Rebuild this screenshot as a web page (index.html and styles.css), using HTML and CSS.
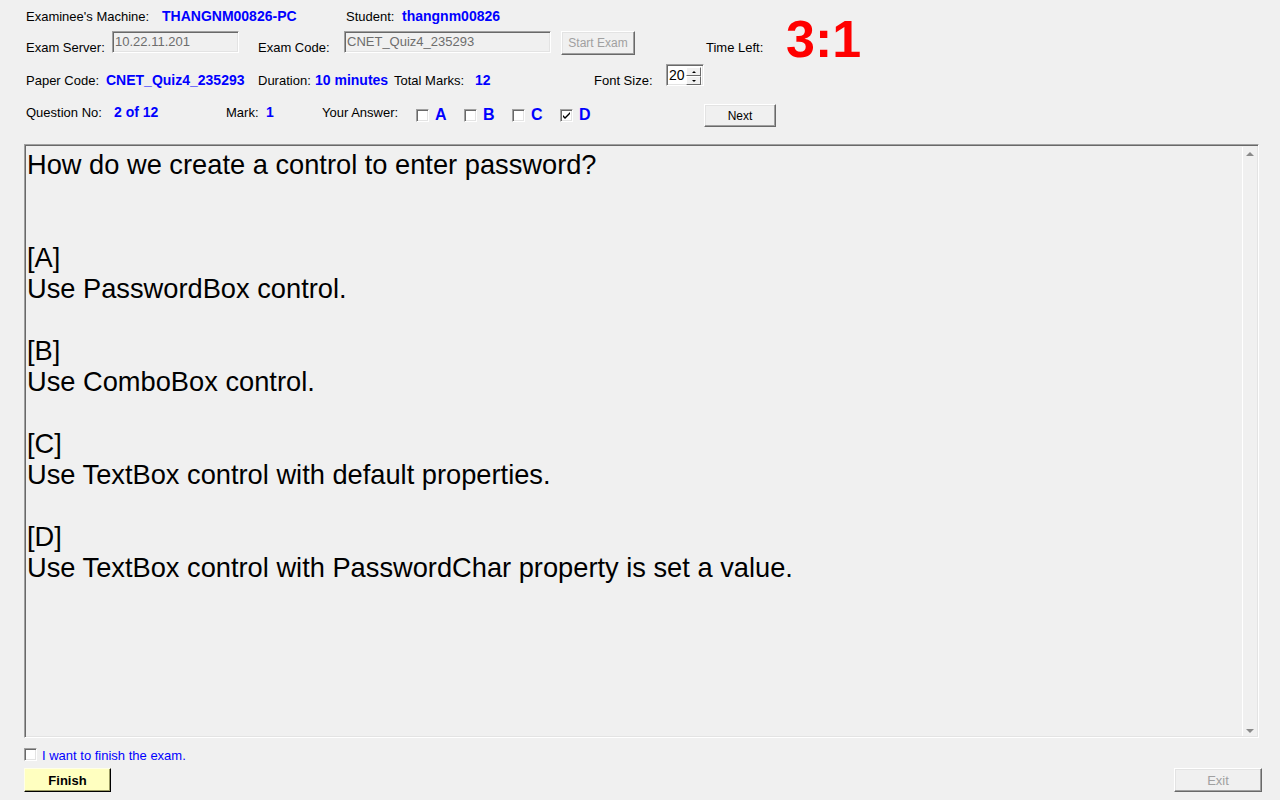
FILE: index.html
```html
<!DOCTYPE html>
<html lang="en">
<head>
<meta charset="utf-8">
<title>Exam Client</title>
<link rel="stylesheet" href="styles.css">
</head>
<body>
<div class="app">
  <div class="row row-1">
    <span class="lbl w-machine">Examinee's Machine:</span>
    <span class="val w-machine-val">THANGNM00826-PC</span>
    <span class="lbl w-student">Student:</span>
    <span class="val">thangnm00826</span>
  </div>

  <div class="row row-2">
    <span class="lbl lbl-down w-server">Exam Server:</span>
    <div class="field w-server-field">10.22.11.201</div>
    <span class="lbl lbl-down w-code">Exam Code:</span>
    <div class="field w-code-field">CNET_Quiz4_235293</div>
    <button class="btn btn-start" disabled>Start Exam</button>
    <span class="lbl lbl-down w-time">Time Left:</span>
    <span class="timer">3:1</span>
  </div>

  <div class="row row-3">
    <span class="lbl lbl-mid w-paper">Paper Code:</span>
    <span class="val lbl-mid w-paper-val">CNET_Quiz4_235293</span>
    <span class="lbl lbl-mid w-duration">Duration:</span>
    <span class="val lbl-mid w-duration-val">10 minutes</span>
    <span class="lbl lbl-mid w-total">Total Marks:</span>
    <span class="val lbl-mid w-total-val">12</span>
    <span class="lbl lbl-mid w-font">Font Size:</span>
    <div class="spinner">
      <span class="spinner-value">20</span>
      <div class="spinner-buttons">
        <span class="spin-btn"><span class="tri-up"></span></span>
        <span class="spin-btn"><span class="tri-down"></span></span>
      </div>
    </div>
  </div>

  <div class="row row-4">
    <span class="lbl lbl-top w-qno">Question No:</span>
    <span class="val lbl-top w-qno-val">2 of 12</span>
    <span class="lbl lbl-top w-mark">Mark:</span>
    <span class="val lbl-top w-mark-val">1</span>
    <span class="lbl lbl-top w-answer">Your Answer:</span>
    <div class="answers">
      <label class="opt"><span class="check"></span><span class="opt-letter">A</span></label>
      <label class="opt"><span class="check"></span><span class="opt-letter">B</span></label>
      <label class="opt"><span class="check"></span><span class="opt-letter">C</span></label>
      <label class="opt"><span class="check checked"><svg width="9" height="9" viewBox="0 0 9 9"><path d="M1 4 L3 6 L8 1 L8 3 L3 8 L1 6 Z" fill="#000"/></svg></span><span class="opt-letter">D</span></label>
    </div>
    <button class="btn btn-next">Next</button>
  </div>

  <div class="question-box">
    <div class="question-content">
      <div class="q-title">How do we create a control to enter password?</div>
      <div class="q-option"><div>[A]</div><div>Use PasswordBox control.</div></div>
      <div class="q-option"><div>[B]</div><div>Use ComboBox control.</div></div>
      <div class="q-option"><div>[C]</div><div>Use TextBox control with default properties.</div></div>
      <div class="q-option"><div>[D]</div><div>Use TextBox control with PasswordChar property is set a value.</div></div>
    </div>
    <div class="scrollbar">
      <span class="sb-arrow"><span class="sb-up"></span></span>
      <span class="sb-arrow"><span class="sb-down"></span></span>
    </div>
  </div>

  <div class="finish-row">
    <span class="check"></span>
    <span class="finish-label">I want to finish the exam.</span>
  </div>

  <div class="footer">
    <button class="btn btn-finish">Finish</button>
    <button class="btn btn-exit" disabled>Exit</button>
  </div>
</div>
</body>
</html>
```

FILE: styles.css
```css
html, body {
  margin: 0;
  padding: 0;
}
body {
  background: #f0f0f0;
  font-family: "Liberation Sans", Arial, sans-serif;
  font-size: 13px;
  color: #000;
}
.app {
  width: 1280px;
  height: 800px;
  box-sizing: border-box;
  padding-left: 24px;
  padding-right: 18px;
  overflow: hidden;
}

/* header rows */
.row {
  display: flex;
  align-items: flex-start;
  padding-left: 2px;
  box-sizing: border-box;
}
.row-1 { height: 31px; padding-top: 9px; }
.row-2 { height: 33px; }
.row-3 { height: 40px; }
.row-4 { height: 40px; }

.lbl, .val {
  flex: none;
  line-height: 15px;
  white-space: nowrap;
}
.val {
  color: #0000ff;
  font-weight: bold;
  font-size: 14px;
}
.lbl-down { margin-top: 9px; }
.lbl-mid { margin-top: 9px; }
.lbl-top { margin-top: 1px; }

.w-machine { width: 136px; }
.w-machine-val { width: 184px; }
.w-student { width: 56px; }

.w-server { width: 86px; }
.w-server-field { width: 127px; }
.w-code { width: 86px; margin-left: 19px; }
.w-code-field { width: 207px; }
.w-time { width: 79px; margin-left: 71px; }

.w-paper { width: 80px; }
.w-paper-val { width: 152px; }
.w-duration { width: 57px; }
.w-duration-val { width: 79px; }
.w-total { width: 81px; }
.w-total-val { width: 119px; }
.w-font { width: 71px; }

.w-qno { width: 88px; }
.w-qno-val { width: 112px; }
.w-mark { width: 40px; }
.w-mark-val { width: 56px; }
.w-answer { width: 94px; }

/* sunken disabled text fields */
.field {
  flex: none;
  height: 22px;
  box-sizing: border-box;
  border: 1px solid;
  border-color: #a0a0a0 #ffffff #ffffff #a0a0a0;
  box-shadow: inset 1px 1px 0 #696969, inset -1px -1px 0 #e3e3e3;
  background: #f0f0f0;
  color: #6d6d6d;
  padding: 2px 0 0 2px;
  line-height: 15px;
  white-space: nowrap;
  overflow: hidden;
}

/* classic buttons */
.btn {
  flex: none;
  font-family: "Liberation Sans", Arial, sans-serif;
  font-size: 12px;
  color: #000;
  background: #f0f0f0;
  border: 1px solid;
  border-color: #ffffff #696969 #696969 #ffffff;
  box-shadow: inset -1px -1px 0 #a0a0a0, inset 1px 1px 0 #e3e3e3;
  padding: 0;
  box-sizing: border-box;
  margin: 0;
}
.btn[disabled] { color: #a0a0a0; }
.btn-start {
  width: 74px;
  height: 24px;
  margin-left: 10px;
}
.timer {
  flex: none;
  font-size: 52px;
  font-weight: bold;
  line-height: 54px;
  color: #ff0000;
  margin-top: -19px;
  margin-left: 1px;
  white-space: nowrap;
}
.btn-next {
  width: 72px;
  height: 23px;
}

/* font size spinner */
.spinner {
  flex: none;
  margin-left: 1px;
  width: 38px;
  height: 22px;
  box-sizing: border-box;
  border: 1px solid;
  border-color: #a0a0a0 #ffffff #ffffff #a0a0a0;
  box-shadow: inset 1px 1px 0 #696969, inset -1px -1px 0 #e3e3e3;
  background: #ffffff;
  display: flex;
  align-items: flex-start;
  padding: 2px 2px 2px 2px;
}
.spinner-value {
  flex: 1;
  font-size: 14px;
  line-height: 16px;
  padding-left: 0;
}
.spinner-buttons {
  display: flex;
  flex-direction: column;
  width: 15px;
}
.spin-btn {
  height: 9px;
  box-sizing: border-box;
  border: 1px solid;
  border-color: #ffffff #696969 #696969 #ffffff;
  background: #f0f0f0;
  display: flex;
  align-items: center;
  justify-content: center;
}
.tri-up, .tri-down {
  width: 0;
  height: 0;
  border-left: 2px solid transparent;
  border-right: 2px solid transparent;
}
.tri-up { border-bottom: 2px solid #000; }
.tri-down { border-top: 2px solid #000; }

/* answer checkboxes */
.answers {
  flex: none;
  width: 288px;
  display: flex;
}
.opt {
  flex: none;
  width: 48px;
  display: flex;
  align-items: flex-start;
}
.check {
  flex: none;
  width: 13px;
  height: 13px;
  box-sizing: border-box;
  border: 1px solid;
  border-color: #a0a0a0 #ffffff #ffffff #a0a0a0;
  box-shadow: inset 1px 1px 0 #696969, inset -1px -1px 0 #e3e3e3;
  background: #ffffff;
  display: flex;
  align-items: center;
  justify-content: center;
}
.answers .check { margin-top: 5px; }
.opt-letter {
  margin-left: 6px;
  margin-top: 2px;
  font-size: 16px;
  font-weight: bold;
  line-height: 18px;
  color: #0000ff;
}

/* question text area */
.question-box {
  width: 1235px;
  height: 594px;
  box-sizing: border-box;
  border: 1px solid;
  border-color: #a0a0a0 #ffffff #ffffff #a0a0a0;
  box-shadow: inset 1px 1px 0 #696969, inset -1px -1px 0 #e3e3e3;
  display: flex;
}
.question-content {
  flex: 1;
  padding: 4px 0 0 2px;
  font-size: 27.25px;
  line-height: 31px;
  white-space: nowrap;
  overflow: hidden;
}
.q-title { margin-bottom: 62px; }
.q-option { margin-bottom: 31px; }

.scrollbar {
  flex: none;
  width: 14px;
  margin: 2px 1px 1px 0;
  border-left: 1px solid #ffffff;
  background: #f0f0f0;
  display: flex;
  flex-direction: column;
  justify-content: space-between;
}
.sb-arrow {
  height: 17px;
  display: flex;
  align-items: center;
  justify-content: center;
}
.sb-up, .sb-down {
  width: 0;
  height: 0;
  border-left: 4px solid transparent;
  border-right: 4px solid transparent;
}
.sb-up { border-bottom: 4px solid #8a8a8a; margin-top: -4px; }
.sb-down { border-top: 4px solid #8a8a8a; margin-bottom: -6px; }

/* bottom area */
.finish-row {
  display: flex;
  align-items: flex-start;
  height: 20px;
  margin-top: 10px;
}
.finish-label {
  margin-left: 5px;
  line-height: 15px;
  color: #0000ff;
}
.footer {
  display: flex;
  justify-content: space-between;
}
.btn-finish {
  width: 87px;
  height: 24px;
  background: #ffffc0;
  border-color: #ffffe8 #000000 #000000 #ffffe8;
  box-shadow: inset -1px -1px 0 #9a9a60;
  font-size: 13px;
  font-weight: bold;
}
.btn-exit {
  width: 88px;
  height: 24px;
  font-size: 13px;
}
```
